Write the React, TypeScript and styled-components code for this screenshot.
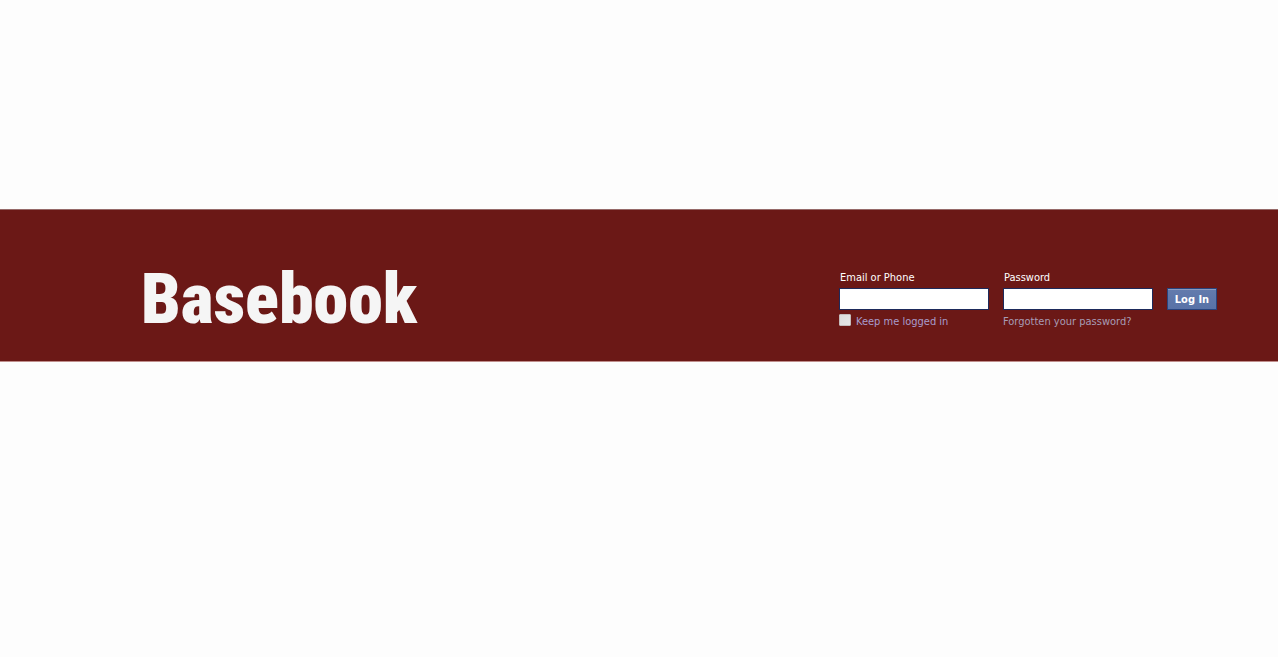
import React from "react";
import styled, { createGlobalStyle } from "styled-components";

const GlobalStyle = createGlobalStyle`
  *, *::before, *::after { box-sizing: border-box; }
  body {
    margin: 0;
    background: #fdfdfd;
    font-family: "DejaVu Sans Condensed", "DejaVu Sans", sans-serif;
    font-size: 11px;
    line-height: 16px;
  }
`;

const Page = styled.div`
  padding-top: 209px;
`;

const Banner = styled.header`
  display: flex;
  justify-content: space-between;
  align-items: flex-start;
  padding: 60px 61px 29px 141px;
  background: #6b1816;
  border-top: 1px solid #966a69;
  border-bottom: 1px solid #c08e8c;
`;

const Logo = styled.h1`
  margin: 0;
  color: #f5f5f5;
  font: 900 70px/58px "Roboto Condensed", "Roboto", sans-serif;
`;

const LoginForm = styled.form`
  display: grid;
  grid-template-columns: 150px 150px 50px;
  grid-template-rows: 16px 22px 20px;
  column-gap: 14px;
  row-gap: 2px;
`;

const FieldLabel = styled.label<{ $column: number }>`
  grid-area: 1 / ${(p) => p.$column};
  padding-left: 1px;
  color: #fff;
`;

const TextField = styled.input<{ $column: number }>`
  grid-area: 2 / ${(p) => p.$column};
  width: 100%;
  height: 22px;
  padding: 3px;
  border: 1px solid #1d2a5b;
  border-radius: 0;
  background: #fff;
  font: inherit;
  outline: none;
`;

const LoginButton = styled.button`
  grid-area: 2 / 3;
  height: 22px;
  padding: 1px 0 0;
  border: 1px solid #29447e;
  background: #5b74a8;
  background-image: linear-gradient(#637bad, #5872a7);
  box-shadow: inset 0 1px 0 #8a9cc2;
  color: #fff;
  font: inherit;
  font-weight: bold;
  white-space: nowrap;
  cursor: pointer;
`;

const KeepLabel = styled.label`
  grid-area: 3 / 1;
  display: flex;
  align-items: center;
  gap: 5px;
  color: #a79ccb;
`;

const Checkbox = styled.input`
  appearance: none;
  flex: none;
  width: 12px;
  height: 12px;
  margin: 0 0 4px;
  border: 1px solid #c4bcbc;
  border-radius: 1px;
  background: linear-gradient(135deg, #dcdcdc, #e6e6e6);

  &:checked { background: #5b74a8; }
`;

const ForgotLink = styled.a`
  grid-area: 3 / 2;
  line-height: 20px;
  color: #a79cb5;
  text-decoration: none;
`;

export default function App() {
  return (
    <Page>
      <GlobalStyle />
      <Banner>
        <Logo>Basebook</Logo>
        <LoginForm onSubmit={(e: React.FormEvent) => e.preventDefault()}>
          <FieldLabel $column={1} htmlFor="email">Email or Phone</FieldLabel>
          <TextField $column={1} id="email" type="text" />
          <FieldLabel $column={2} htmlFor="password">Password</FieldLabel>
          <TextField $column={2} id="password" type="password" />
          <LoginButton type="submit">Log In</LoginButton>
          <KeepLabel>
            <Checkbox type="checkbox" />
            Keep me logged in
          </KeepLabel>
          <ForgotLink href="#forgot">Forgotten your password?</ForgotLink>
        </LoginForm>
      </Banner>
    </Page>
  );
}
